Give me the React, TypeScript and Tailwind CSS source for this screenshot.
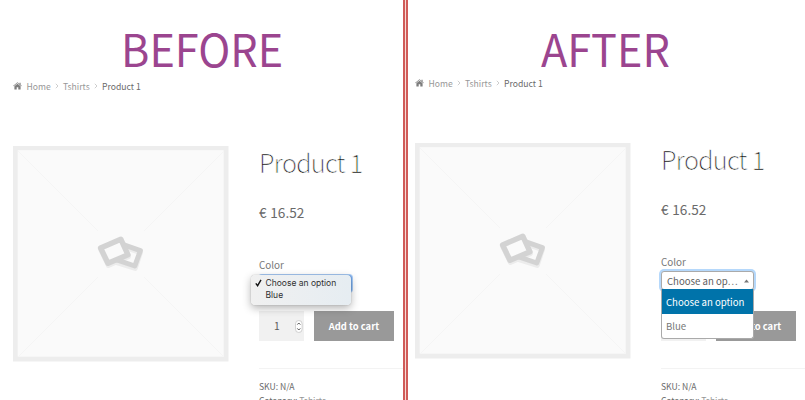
import type { ReactNode } from "react";

const sans = "font-['Noto_Sans_CJK_SC','Noto_Sans',sans-serif]";

function HomeIcon() {
  return (
    <svg width="9" height="8" viewBox="0 0 9 8" className="mr-[4.5px] shrink-0" fill="#7d7d7d">
      <path d="M4.5 1.7 1.4 4.2V7.4H3.7V5.2H5.3V7.4H7.6V4.2Z" />
      <path d="M4.5 .2 .2 3.8 .7 4.3 4.5 1.1 8.3 4.3 8.8 3.8 7.6 2.8V.7H6.5V1.9Z" />
    </svg>
  );
}

function Chevron() {
  return (
    <svg width="4" height="6" viewBox="0 0 4 6" className="shrink-0" fill="none" stroke="#c8c8c8" strokeWidth="0.9">
      <path d="M.8 .8 3 3 .8 5.2" />
    </svg>
  );
}

function Breadcrumb() {
  return (
    <nav className="flex h-5 items-center text-[8.6px] leading-5 text-[#979797]">
      <HomeIcon />
      <span className="w-[28px]">Home</span>
      <Chevron />
      <span className="ml-[4.5px] w-[31px]">Tshirts</span>
      <Chevron />
      <span className="ml-[4px] text-[#6a6a6a]">Product 1</span>
    </nav>
  );
}

function Placeholder() {
  return (
    <svg width="216" height="216" viewBox="0 0 216 216" className="shrink-0">
      <rect x="0" y="0" width="215.5" height="215.5" fill="#ededed" />
      <rect x="4.7" y="4.2" width="206" height="206.5" fill="#fafafa" />
      <path d="M5 5 85 85M211 5 131 85M5 211 85 131M211 211 131 131" stroke="#f5f5f5" strokeWidth="1" />
      <g strokeLinejoin="round" fill="none" transform="translate(0 .8)">
        <g stroke="#ececec" strokeWidth="5" transform="translate(0 1.6)">
          <path d="M111 98.5 127.4 104.3 122.2 120 103 114" />
          <path d="M87.8 101.3 107.8 92.5 115.3 108.3 95.3 117Z" />
        </g>
        <path d="M111 98 127.4 103.8 121.8 119.2 103 112.8" stroke="#d3d3d3" strokeWidth="5" />
        <path d="M87.6 101.2 107.8 92.4 115 108 95 116.5Z" stroke="#d3d3d3" strokeWidth="5.4" fill="#fafafa" />
      </g>
    </svg>
  );
}

function Title() {
  return (
    <h1 className="-mt-1 h-10 whitespace-nowrap text-[25.2px] font-light leading-10 tracking-[-0.65px] text-[#000000] [-webkit-text-stroke:0.6px_white]">
      Product 1
    </h1>
  );
}

function Price() {
  return <p className="mt-5 h-5 text-[13.6px] leading-5 text-[#6a6a6a] [word-spacing:0.7px]">€ 16.52</p>;
}

function Meta() {
  return (
    <div className="border-t border-[#f3f3f3] pt-[10px] text-[8.6px] leading-[14px] text-[#6a6a6a]">
      <p>SKU: N/A</p>
      <p>
        Category: <span className="text-[#979797]">Tshirts</span>
      </p>
    </div>
  );
}

function CartButton() {
  return (
    <button className="h-[30px] w-[80px] whitespace-nowrap bg-[#999999] text-center text-[9.4px] font-bold leading-[30px] text-white">
      Add to cart
    </button>
  );
}

function NativeSelect() {
  return (
    <div className="relative h-[17px] w-[93px] rounded-[3px] border border-[#79aef0] bg-[#3f83ef] ring-1 ring-[#a9cdf8]">
      <div className="absolute -left-[9px] -top-[1px] h-[30px] w-[100px] rounded-[4px] bg-gradient-to-r from-[#f0f0f0] to-[#e6edf2] pt-[2px] font-['Inter',sans-serif] text-[8.5px] leading-[12px] text-[#303030] shadow-[0_3px_8px_rgba(0,0,0,0.3),0_0_1px_rgba(0,0,0,0.4)]">
        <div className="flex items-center">
          <svg width="7" height="8" viewBox="0 0 7 8" className="ml-[4px] mr-[3.5px]" fill="none" stroke="#111" strokeWidth="1.4">
            <path d="M.8 4.4 2.6 6.7 6 .9" />
          </svg>
          <span className="whitespace-nowrap">Choose an option</span>
        </div>
        <div className="pl-[14.5px]">Blue</div>
      </div>
    </div>
  );
}

function Quantity() {
  return (
    <div className="flex h-[30px] w-[45px] items-center bg-[#f1f1f1] text-[10.3px] text-[#5c5c5c]">
      <span className="ml-[15px] w-[21px]">1</span>
      <svg width="8" height="13" viewBox="0 0 8 13" fill="none">
        <rect x=".5" y=".5" width="6.6" height="12" rx="3.3" fill="#fff" stroke="#c6c6c6" strokeWidth=".8" />
        <path d="M2.3 4.6 3.8 3 5.3 4.6M2.3 8.4 3.8 10 5.3 8.4" stroke="#444" strokeWidth=".9" />
      </svg>
    </div>
  );
}

function EnhancedSelect() {
  return (
    <div className="relative z-10 h-[19px] w-[93px] rounded-[3px] border border-[#aaaaaa] bg-white ring-2 ring-[#b5d8fb]">
      <div className="flex h-[18px] items-center justify-between pl-[5px] pr-[4px] text-[9.6px] leading-[18px] text-[#606060]">
        <span className="whitespace-nowrap">Choose an op…</span>
        <svg width="5" height="4" viewBox="0 0 5 4" fill="#777">
          <path d="M0 3.5 2.5 .5 5 3.5Z" />
        </svg>
      </div>
      <ul className="absolute -left-px top-[17px] h-[50px] w-[93px] rounded-b-[3px] border border-t-0 border-[#aaaaaa] bg-white text-[9.6px] text-[#777]">
        <li className="h-[25px] whitespace-nowrap bg-[#0073aa] pl-[4px] leading-[26px] text-white">Choose an option</li>
        <li className="pl-[4px] leading-[24px]">Blue</li>
      </ul>
    </div>
  );
}

function Heading({ children }: { children: ReactNode }) {
  return (
    <h2 className="origin-left scale-x-[0.96] whitespace-nowrap text-[45px] leading-[50px] text-[#9b458f]">
      {children}
    </h2>
  );
}

export default function App() {
  return (
    <main className={`${sans} flex h-[400px] w-[805px] overflow-hidden bg-white`}>
      <section className="h-[400px] w-[403px] shrink-0 overflow-hidden">
        <header className="h-[76px] pl-[121px] pt-[23px]">
          <Heading>BEFORE</Heading>
        </header>
        <div className="pl-[13px]">
          <Breadcrumb />
          <div className="mt-[50px] flex">
            <Placeholder />
            <div className="ml-[30px] flex-1">
              <Title />
              <Price />
              <p className="mt-[33px] h-5 text-[9.9px] leading-5 text-[#777777]">Color</p>
              <NativeSelect />
              <div className="mt-[19px] flex gap-[10px]">
                <Quantity />
                <CartButton />
              </div>
              <div className="mt-[27px]">
                <Meta />
              </div>
            </div>
          </div>
        </div>
      </section>
      <div className="flex w-[5px] shrink-0 justify-center bg-[#d05b59]">
        <div className="w-px bg-[#f6dcd6]" />
      </div>
      <section className="h-[400px] w-[397px] shrink-0 overflow-hidden">
        <header className="h-[73px] pl-[133px] pt-[23px]">
          <Heading>AFTER</Heading>
        </header>
        <div className="pl-[7px]">
          <Breadcrumb />
          <div className="mt-[50px] flex">
            <Placeholder />
            <div className="ml-[30px] flex-1">
              <Title />
              <Price />
              <p className="-mb-px mt-[33px] h-5 text-[9.9px] leading-5 text-[#777777]">Color</p>
              <EnhancedSelect />
              <div className="mt-[21px] flex gap-[10px]">
                <div className="h-[30px] w-[45px] bg-[#f1f1f1]" />
                <CartButton />
              </div>
              <div className="mt-[27px]">
                <Meta />
              </div>
            </div>
          </div>
        </div>
      </section>
    </main>
  );
}
